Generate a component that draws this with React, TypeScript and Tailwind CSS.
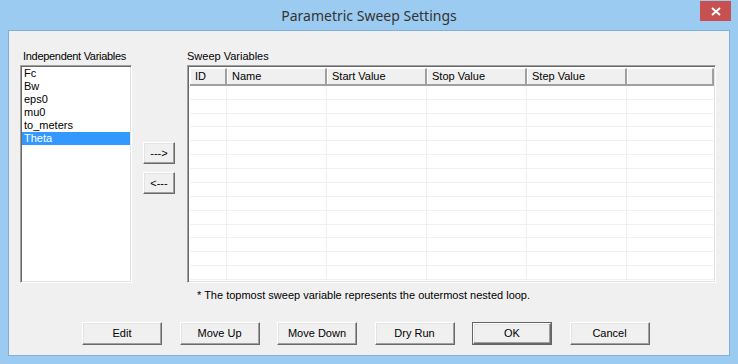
import React from "react";

const sunken =
  "border border-t-[#a0a0a0] border-l-[#a0a0a0] border-r-white border-b-white shadow-[inset_1px_1px_0_#696969,inset_-1px_-1px_0_#e3e3e3]";
const raised =
  "border border-t-white border-l-white border-r-[#696969] border-b-[#696969] shadow-[inset_-1px_-1px_0_#a0a0a0,inset_1px_1px_0_#e3e3e3] bg-[#f0f0f0]";

const vars = ["Fc", "Bw", "eps0", "mu0", "to_meters", "Theta"];
const cols = [
  { name: "ID", w: "w-[37px]" },
  { name: "Name", w: "w-[100px]" },
  { name: "Start Value", w: "w-[100px]" },
  { name: "Stop Value", w: "w-[100px]" },
  { name: "Step Value", w: "w-[100px]" },
  { name: "", w: "flex-1" },
];

function Btn({ label, def }: { label: string; def?: boolean }) {
  if (def) {
    return (
      <div className="w-[80px] h-[23px] border border-[#646464] flex">
        <div className={`flex-1 ${raised} flex items-center justify-center`}>{label}</div>
      </div>
    );
  }
  return (
    <div className={`w-[80px] h-[23px] ${raised} flex items-center justify-center`}>{label}</div>
  );
}

export default function App() {
  return (
    <div
      className="w-[738px] h-[364px] bg-[#9ccbf2] flex flex-col text-[11px] leading-[13px] text-black"
      style={{ fontFamily: '"Liberation Sans", Arial, sans-serif' }}
    >
      {/* Title bar */}
      <div className="h-[30px] flex items-start relative">
        <div
          className="flex-1 h-[30px] flex items-center justify-center text-[14px] text-[#333333]"
          style={{ fontFamily: '"Noto Sans", "Open Sans", sans-serif' }}
        >
          Parametric Sweep Settings
        </div>
        <div className="absolute left-[700px] top-[1px] w-[31px] h-[20px] bg-[#c75050] flex items-center justify-center">
          <svg width="10" height="9" viewBox="0 0 10 9">
            <path d="M1 1 L9 8 M9 1 L1 8" stroke="white" strokeWidth="2" />
          </svg>
        </div>
      </div>
      {/* Client */}
      <div className="ml-[8px] w-[722px] h-[326px] border border-[#7fb0dd] bg-[#f0f0f0] flex flex-col pt-[19px]">
        <div className="flex pl-[11px]">
          {/* Left column */}
          <div className="w-[112px] flex flex-col">
            <div className="h-[13px] pl-[3px] mb-[2px] whitespace-nowrap tracking-[-0.3px]">
              Independent Variables
            </div>
            <div className={`h-[218px] bg-white ${sunken} pt-[1px] pl-[1px] pr-[1px]`}>
              {vars.map((v) => (
                <div
                  key={v}
                  className={`h-[13px] pl-[2px] ${v === "Theta" ? "bg-[#3399ff] text-white" : ""}`}
                >
                  {v}
                </div>
              ))}
            </div>
          </div>
          {/* Arrow buttons */}
          <div className="ml-[11px] w-[32px] flex flex-col pt-[92px] gap-[8px]">
            <div className={`h-[22px] ${raised} flex items-center justify-center`}>---&gt;</div>
            <div className={`h-[22px] ${raised} flex items-center justify-center`}>&lt;---</div>
          </div>
          {/* Sweep variables */}
          <div className="ml-[12px] w-[529px] flex flex-col">
            <div className="h-[13px] mb-[2px] whitespace-nowrap">Sweep Variables</div>
            <div className={`h-[218px] bg-white ${sunken} p-[2px] pr-[1px] flex flex-col`}>
              <div className="h-[18px] flex border-b-2 border-b-[#a0a0a0]">
                {cols.map((c, i) => (
                  <div
                    key={i}
                    className={`${c.w} h-full pl-[4px] flex items-center whitespace-nowrap border-l border-t border-l-white border-t-white border-r-2 border-r-[#a0a0a0] bg-[#f0f0f0]`}
                  >
                    {c.name}
                  </div>
                ))}
              </div>
              {Array.from({ length: 14 }).map((_, r) => (
                <div key={r} className="h-[14px] flex border-b border-b-[#f0f0f0]">
                  {cols.map((c, i) => (
                    <div key={i} className={`${c.w} h-full ${i < 5 ? "border-r border-r-[#f0f0f0]" : ""}`} />
                  ))}
                </div>
              ))}
            </div>
          </div>
        </div>
        <div className="mt-[6px] h-[13px] pl-[188px] whitespace-nowrap">
          * The topmost sweep variable represents the outermost nested loop.
        </div>
        <div className="mt-[20px] flex pl-[73px] gap-[17.5px]">
          <Btn label="Edit" />
          <Btn label="Move Up" />
          <Btn label="Move Down" />
          <Btn label="Dry Run" />
          <Btn label="OK" def />
          <Btn label="Cancel" />
        </div>
      </div>
    </div>
  );
}
